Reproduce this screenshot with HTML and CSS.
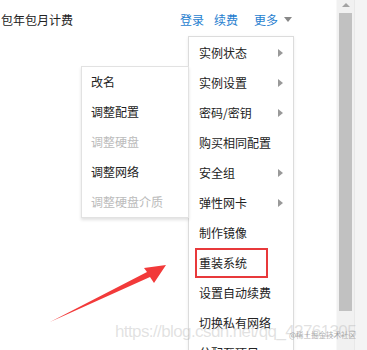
FILE: index.html
```html
<!DOCTYPE html>
<html lang="zh-CN">

<head>
    <meta charset="UTF-8">
    <title>更多操作</title>
    <link rel="stylesheet" href="styles.css">
</head>

<body>
    <div class="page">
        <div class="main">
            <div class="row">
                <span class="billing">包年包月计费</span>
                <div class="actions">
                    <a href="#">登录</a>
                    <a href="#">续费</a>
                    <a href="#" class="more">更多 <span class="caret"></span></a>
                </div>
            </div>

            <!-- more menu -->
            <ul class="menu">
                <li class="has-sub">实例状态</li>
                <li class="has-sub">实例设置</li>
                <li class="has-sub">密码/密钥</li>
                <li>购买相同配置</li>
                <li class="has-sub">安全组</li>
                <li class="has-sub">弹性网卡</li>
                <li>制作镜像</li>
                <li class="marked">重装系统</li>
                <li>设置自动续费</li>
                <li>切换私有网络</li>
                <li>分配至项目</li>
            </ul>

            <!-- instance settings submenu -->
            <ul class="submenu">
                <li>改名</li>
                <li>调整配置</li>
                <li class="disabled">调整硬盘</li>
                <li>调整网络</li>
                <li class="disabled">调整硬盘介质</li>
            </ul>

            <svg class="pointer" width="130" height="70" viewBox="0 0 130 70">
                <polygon points="2,66 99,16 96,12 118,9 106,27 102,21" fill="#f23a3a" />
            </svg>

            <div class="watermark">https://blog.csdn.net/qq_42761305</div>
            <div class="stamp">@稀土掘金技术社区</div>
        </div>

        <div class="scrollbar">
            <div class="track">
                <span class="up"></span>
                <div class="thumb"></div>
            </div>
            <div class="edge"></div>
        </div>
    </div>
</body>

</html>
```

FILE: styles.css
```css
body {
    margin: 0;
    font-family: "Noto Sans CJK SC", "Liberation Sans", sans-serif;
    font-size: 12px;
    color: #222;
    background: #fff;
}

.page {
    display: flex;
    height: 350px;
    overflow: hidden;
}

.main {
    position: relative;
    flex: 1;
}

.row {
    display: flex;
    align-items: center;
    height: 38px;
    padding-right: 44px;
}

.billing {
    margin-left: 1px;
    font-size: 12px;
}

.actions {
    margin-left: auto;
    display: flex;
    align-items: center;
    gap: 10px;
}

.actions a {
    color: #1f7ecf;
    text-decoration: none;
}

.actions .more {
    margin-left: 6px;
    display: flex;
    align-items: center;
    gap: 6px;
}

.caret {
    width: 0;
    height: 0;
    border-left: 4px solid transparent;
    border-right: 4px solid transparent;
    border-top: 5px solid #888;
    margin-top: 1px;
}

ul {
    list-style: none;
    margin: 0;
    padding: 0;
}

.menu {
    position: absolute;
    left: 188px;
    top: 36px;
    width: 104px;
    height: 330px;
    background: #fff;
    border: 1px solid #dcdcdc;
    box-shadow: 0 1px 3px rgba(0, 0, 0, 0.08);
}

.menu li {
    position: relative;
    height: 30px;
    line-height: 30px;
    padding-left: 10px;
    white-space: nowrap;
}

.menu li:first-child {
    margin-top: 1px;
}

.has-sub::after {
    content: "";
    position: absolute;
    left: 89px;
    top: 11px;
    border-top: 4px solid transparent;
    border-bottom: 4px solid transparent;
    border-left: 5px solid #999;
}

.marked::before {
    content: "";
    position: absolute;
    left: 6px;
    top: 0;
    width: 69px;
    height: 26px;
    border: 2px solid #e8393b;
}

.submenu {
    position: absolute;
    left: 81px;
    top: 66px;
    width: 106px;
    background: #fff;
    border: 1px solid #e2e2e2;
    box-shadow: 0 2px 3px rgba(0, 0, 0, 0.12);
}

.submenu li {
    height: 30px;
    line-height: 30px;
    padding-left: 9px;
}

.submenu li.disabled {
    color: #bbb;
}

.pointer {
    position: absolute;
    left: 48px;
    top: 256px;
}

.watermark {
    position: absolute;
    left: 115px;
    top: 322px;
    font-family: "Liberation Sans", sans-serif;
    font-size: 17px;
    letter-spacing: -0.6px;
    color: rgba(170, 170, 170, 0.35);
    white-space: nowrap;
}

.stamp {
    position: absolute;
    left: 289px;
    top: 329px;
    font-size: 7.5px;
    line-height: 12px;
    color: rgba(120, 120, 120, 0.6);
    white-space: nowrap;
}

.scrollbar {
    display: flex;
    width: 31px;
    flex: none;
}

.track {
    width: 17px;
    background: #f1f1f1;
    border-left: 1px solid #f8f8f8;
    display: flex;
    flex-direction: column;
    align-items: center;
}

.up {
    margin-top: 3px;
    width: 0;
    height: 0;
    border-left: 4px solid transparent;
    border-right: 4px solid transparent;
    border-bottom: 4px solid #a3a3a3;
}

.thumb {
    margin-top: 6px;
    width: 13px;
    height: 298px;
    background: #c1c1c1;
}

.edge {
    flex: 1;
    background: #f4f4f4;
    border-left: 1px solid #e8e8e8;
}
```
